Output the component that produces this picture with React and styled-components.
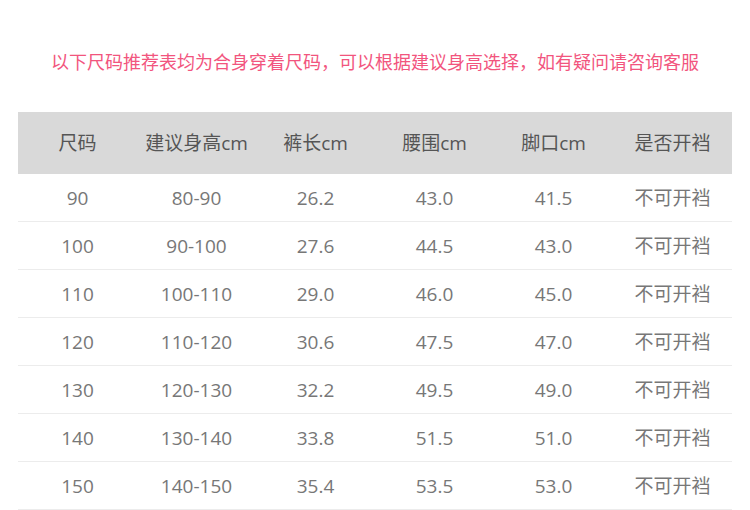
import styled, { createGlobalStyle } from "styled-components";

const GlobalStyle = createGlobalStyle`
  body {
    margin: 0;
    background: #fff;
    font-family: "Open Sans", "Noto Sans CJK SC", sans-serif;
  }
`;

const Page = styled.div`
  width: 750px;
  padding: 0 18px;
  box-sizing: border-box;
`;

const Notice = styled.p`
  margin: 0;
  padding-top: 50px;
  height: 24px;
  line-height: 24px;
  font-size: 18px;
  color: #f2557e;
  text-align: center;
  white-space: nowrap;
`;

const Table = styled.div`
  margin-top: 38px;
  width: 714px;
`;

const Row = styled.div`
  display: grid;
  grid-template-columns: repeat(6, 1fr);
  align-items: center;
  height: ${(p) => (p.$head ? "62px" : "47px")};
  background: ${(p) => (p.$head ? "#d9d9d9" : "#fff")};
  border-bottom: ${(p) => (p.$head ? "none" : "1px solid #ececec")};
  color: ${(p) => (p.$head ? "#555" : "#777")};
`;

const Cell = styled.div`
  text-align: center;
  font-size: 19px;
  line-height: 24px;
`;

const head = ["尺码", "建议身高cm", "裤长cm", "腰围cm", "脚口cm", "是否开裆"];

const rows = [
  ["90", "80-90", "26.2", "43.0", "41.5"],
  ["100", "90-100", "27.6", "44.5", "43.0"],
  ["110", "100-110", "29.0", "46.0", "45.0"],
  ["120", "110-120", "30.6", "47.5", "47.0"],
  ["130", "120-130", "32.2", "49.5", "49.0"],
  ["140", "130-140", "33.8", "51.5", "51.0"],
  ["150", "140-150", "35.4", "53.5", "53.0"],
];

export default function App() {
  return (
    <>
      <GlobalStyle />
      <Page>
        <Notice>
          以下尺码推荐表均为合身穿着尺码，可以根据建议身高选择，如有疑问请咨询客服
        </Notice>
        <Table>
          <Row $head>
            {head.map((h) => (
              <Cell key={h}>{h}</Cell>
            ))}
          </Row>
          {rows.map((r) => (
            <Row key={r[0]}>
              {r.map((v, i) => (
                <Cell key={i}>{v}</Cell>
              ))}
              <Cell>不可开裆</Cell>
            </Row>
          ))}
        </Table>
      </Page>
    </>
  );
}
